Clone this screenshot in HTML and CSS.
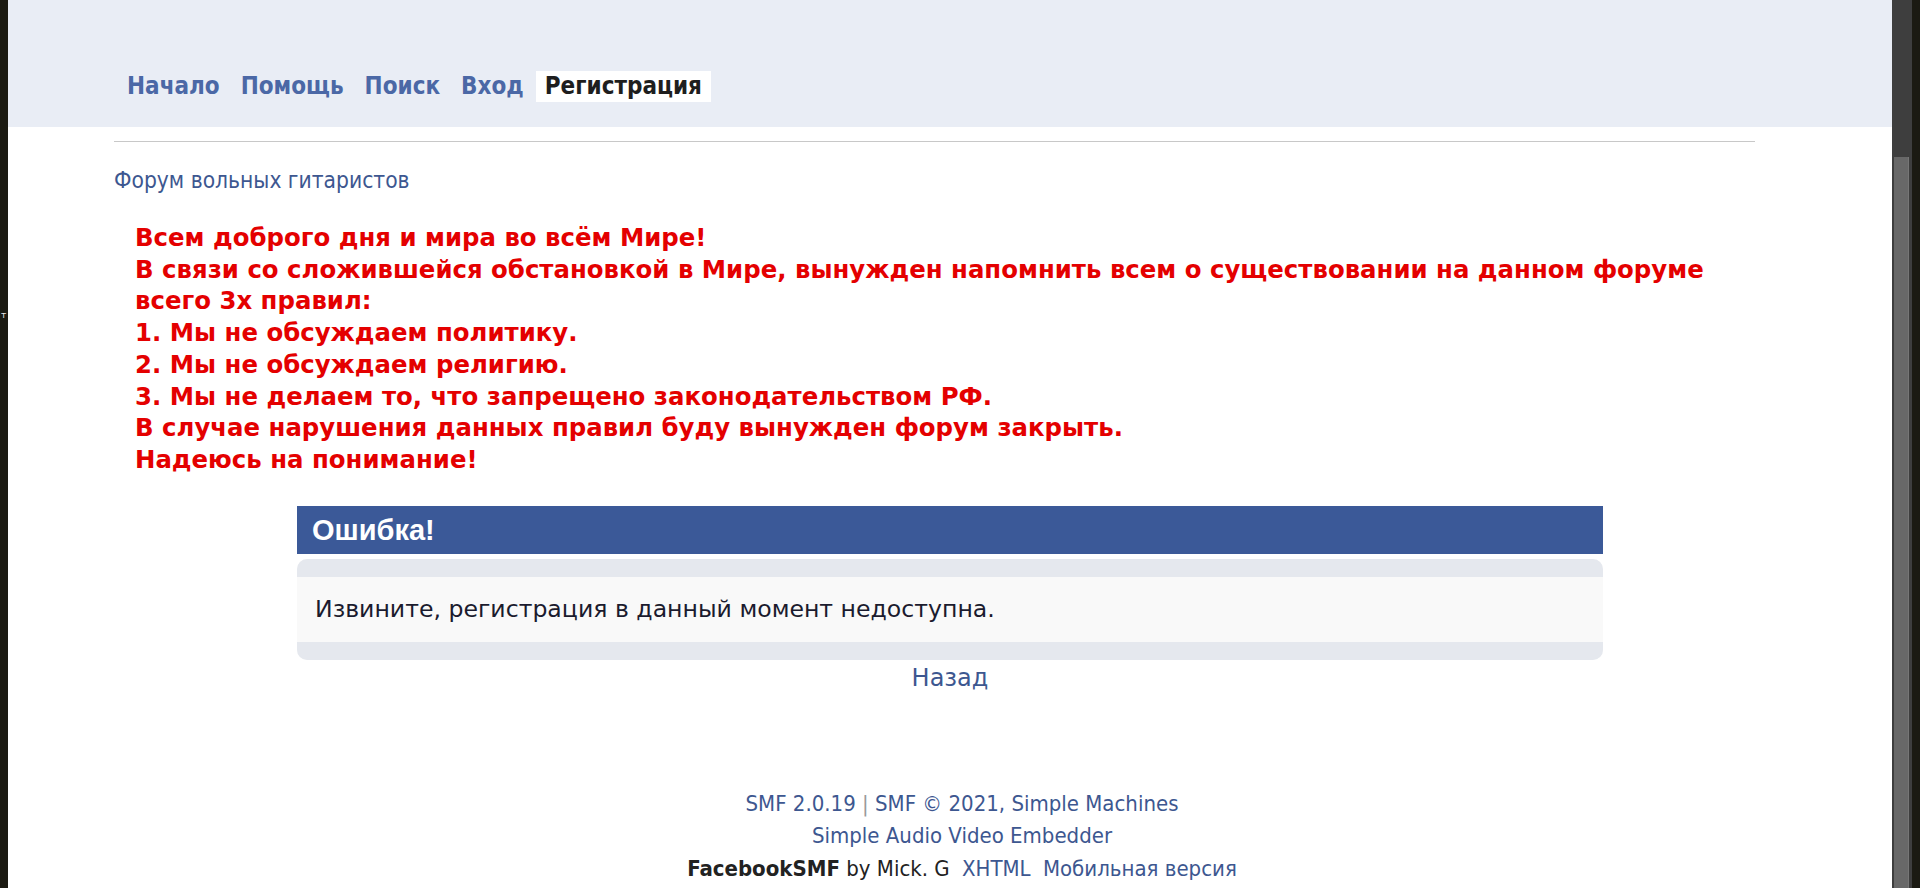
FILE: index.html
```html
<!DOCTYPE html>
<html lang="ru">
<head>
<meta charset="utf-8">
<title>Ошибка!</title>
<link rel="stylesheet" href="styles.css">
</head>
<body>
<div class="frame">
  <div class="edge-left"><span class="edge-glyph">т</span></div>
  <div class="page">
    <header class="masthead">
      <nav class="menu">
        <a class="menu-item" href="#">Начало</a>
        <a class="menu-item" href="#">Помощь</a>
        <a class="menu-item" href="#">Поиск</a>
        <a class="menu-item" href="#">Вход</a>
        <a class="menu-item active" href="#">Регистрация</a>
      </nav>
    </header>
    <main class="content">
      <div class="rule"></div>
      <div class="linktree"><a href="#">Форум вольных гитаристов</a></div>
      <div class="notice">
        Всем доброго дня и мира во всём Мире!<br>
        В связи со сложившейся обстановкой в Мире, вынужден напомнить всем о существовании на данном форуме<br>
        всего 3х правил:<br>
        1. Мы не обсуждаем политику.<br>
        2. Мы не обсуждаем религию.<br>
        3. Мы не делаем то, что запрещено законодательством РФ.<br>
        В случае нарушения данных правил буду вынужден форум закрыть.<br>
        Надеюсь на понимание!
      </div>
      <div class="fatal">
        <h3 class="catbg">Ошибка!</h3>
        <div class="windowbg">
          <div class="slice"></div>
          <div class="message">Извините, регистрация в данный момент недоступна.</div>
          <div class="slice"></div>
        </div>
        <div class="back"><a href="#">Назад</a></div>
      </div>
    </main>
    <footer class="footer">
      <div class="footer-line"><a href="#">SMF 2.0.19</a> <span class="sep">|</span> <a href="#">SMF © 2021</a>, <a href="#">Simple Machines</a></div>
      <div class="footer-line"><a href="#">Simple Audio Video Embedder</a></div>
      <div class="footer-line"><strong class="theme">FacebookSMF</strong> <span class="author">by Mick. G</span> <a class="xhtml" href="#">XHTML</a> <a href="#">Мобильная версия</a></div>
    </footer>
  </div>
  <div class="scrollbar"><div class="track"></div><div class="thumb"></div></div>
  <div class="edge-right"></div>
</div>
</body>
</html>
```

FILE: styles.css
```css
* { box-sizing: border-box; }

html, body {
  margin: 0;
  padding: 0;
  height: 888px;
  overflow: hidden;
  background: #1b1a12;
}

.frame {
  display: flex;
  width: 1920px;
  height: 888px;
}

.edge-left {
  width: 8px;
  flex: none;
  background: #1b1a12;
  position: relative;
}

.edge-glyph {
  position: absolute;
  left: 1px;
  top: 310px;
  color: #e8e8e8;
  font: 9px "DejaVu Sans", sans-serif;
}

.page {
  width: 1884px;
  flex: none;
  background: #ffffff;
  font-family: "DejaVu Sans", Verdana, sans-serif;
  overflow: hidden;
}

.scrollbar {
  width: 20px;
  flex: none;
  display: flex;
  flex-direction: column;
  background: #3e3e3e;
  padding-left: 2px;
  padding-right: 3px;
}

.track {
  height: 157px;
  flex: none;
}

.thumb {
  flex: 1;
  background: #686868;
  border-right: 1px solid #767676;
}

.edge-right {
  width: 8px;
  flex: none;
  background: #1b1a12;
}

/* header */
.masthead {
  height: 127px;
  background: #e9edf5;
  padding: 71px 0 0 110px;
}

.menu {
  display: flex;
  gap: 3px;
}

.menu-item {
  display: block;
  height: 31px;
  line-height: 31px;
  padding: 0 9px;
  font-family: "DejaVu Sans Condensed", "DejaVu Sans", sans-serif;
  font-stretch: condensed;
  font-weight: bold;
  font-size: 24px;
  color: #4b68a6;
  text-decoration: none;
}

.menu-item.active {
  background: #ffffff;
  color: #1e1e1e;
}

/* content */
.content {
  padding: 14px 137px 0 106px;
}

.rule {
  height: 1px;
  background: #c8c8c8;
}

.linktree {
  margin-top: 24px;
  font-family: "DejaVu Sans Condensed", "DejaVu Sans", sans-serif;
  font-stretch: condensed;
  font-size: 22.6px;
  line-height: 28px;
}

.linktree a {
  color: #3d5790;
  text-decoration: none;
}

.notice {
  margin-top: 28px;
  padding-left: 21px;
  color: #e40000;
  font-weight: bold;
  font-size: 24.4px;
  line-height: 31.7px;
}

.fatal {
  margin: 30px 0 0 183px;
  width: 1306px;
}

.catbg {
  margin: 0;
  height: 48px;
  line-height: 48px;
  padding-left: 15px;
  background: #3b5998;
  color: #ffffff;
  font-family: "Liberation Sans", Arial, sans-serif;
  font-size: 29px;
  font-weight: bold;
}

.windowbg {
  margin-top: 5px;
  border-radius: 10px;
  overflow: hidden;
  background: #f9f9f9;
}

.slice {
  height: 18px;
  background: #e5e8ee;
}

.message {
  height: 65px;
  line-height: 65px;
  padding-left: 18px;
  color: #1b1b2e;
  font-size: 23.6px;
}

.back {
  text-align: center;
  margin-top: 4px;
  font-size: 24px;
  line-height: 28px;
}

.back a {
  color: #3d5790;
  text-decoration: none;
}

/* footer */
.footer {
  margin-top: 96px;
  padding-left: 24px;
  text-align: center;
  font-family: "DejaVu Sans Condensed", "DejaVu Sans", sans-serif;
  font-stretch: condensed;
  font-size: 22px;
  line-height: 32.5px;
  color: #3d5790;
}

.footer a {
  color: #3d5790;
  text-decoration: none;
}

.sep {
  color: #9a9a9a;
}

.theme {
  color: #222222;
}

.author {
  color: #222222;
  margin-right: 6px;
}

.xhtml {
  margin-right: 6px;
}
```
